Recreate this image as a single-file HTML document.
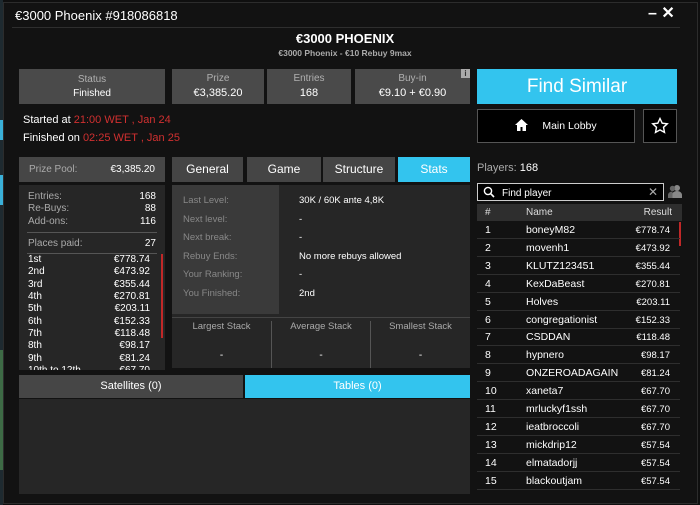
<!DOCTYPE html>
<html><head><meta charset="utf-8"><style>
*{box-sizing:border-box;margin:0;padding:0}
body{width:700px;height:505px;background:#0f0f0f;font-family:"Liberation Sans",sans-serif;color:#fff;position:relative;overflow:hidden;font-size:11px}
.a{position:absolute}
.box{background:#4a4a4a;color:#fff;text-align:center}
.lbl{color:#b0b0b0;font-size:10px}
.tab{position:absolute;top:157px;height:25px;background:#454545;text-align:center;line-height:25px;font-size:12px}
.row{position:absolute;left:477px;width:152px;height:18px;border-bottom:1px solid #2e2e2e;font-size:10px;line-height:17px}
</style></head><body>
<div class="a" style="left:0;top:0;width:3px;height:505px;background:#1e2a30"></div>
<div class="a" style="left:0;top:120px;width:3px;height:20px;background:#3ab0d8"></div>
<div class="a" style="left:0;top:175px;width:3px;height:30px;background:#3ab0d8"></div>
<div class="a" style="left:0;top:350px;width:3px;height:120px;background:#3d6a45"></div>
<div class="a" style="left:3px;top:2px;width:695px;height:502px;background:#121212;border:1px solid #2c2c2c"></div>
<div class="a" style="left:15px;top:8px;font-size:13px">€3000 Phoenix #918086818</div>
<div class="a" style="left:648px;top:3px;font-size:16px;font-weight:bold">– ✕</div>
<div class="a" style="left:12px;top:27px;width:668px;height:1px;background:#2e2e2e"></div>
<div class="a" style="left:0;width:690px;top:31px;text-align:center;font-weight:bold;font-size:13px">€3000 PHOENIX</div>
<div class="a" style="left:0;width:690px;top:48px;text-align:center;font-weight:bold;font-size:8.5px;color:#aaa">€3000 Phoenix - €10 Rebuy 9max</div>

<div class="a box" style="left:19px;top:69px;width:146px;height:35px"><div class="lbl" style="margin-top:5px">Status</div><div style="font-size:10px;margin-top:3px">Finished</div></div>
<div class="a box" style="left:172px;top:69px;width:92px;height:35px"><div class="lbl" style="margin-top:4px">Prize</div><div style="font-size:11px;margin-top:3px">€3,385.20</div></div>
<div class="a box" style="left:267px;top:69px;width:84px;height:35px"><div class="lbl" style="margin-top:4px">Entries</div><div style="font-size:11px;margin-top:3px">168</div></div>
<div class="a box" style="left:355px;top:69px;width:115px;height:35px"><div class="lbl" style="margin-top:4px">Buy-in</div><div style="font-size:11px;margin-top:3px">€9.10 + €0.90</div></div>
<div class="a" style="left:461px;top:69px;width:9px;height:9px;background:#aaa;color:#333;font-size:8px;text-align:center;line-height:9px;font-weight:bold">i</div>

<div class="a" style="left:477px;top:69px;width:200px;height:35px;background:#33c4ee;text-align:center;line-height:35px;font-size:19px">Find Similar</div>
<div class="a" style="left:477px;top:109px;width:158px;height:34px;background:#000;border:1px solid #555;font-size:10.5px;line-height:32px;text-align:center">
<svg width="13" height="12" viewBox="0 0 13 12" style="vertical-align:-2px;margin-right:14px"><path d="M6.5 0L0 6h2v6h3.5V8h2v4H11V6h2z" fill="#fff"/></svg>Main Lobby</div>
<div class="a" style="left:643px;top:109px;width:34px;height:34px;background:#000;border:1px solid #555">
<svg width="32" height="32" viewBox="0 0 32 32"><path d="M16 8.5l2.2 4.7 5.1.6-3.8 3.5 1 5.1-4.5-2.5-4.5 2.5 1-5.1-3.8-3.5 5.1-.6z" fill="none" stroke="#fff" stroke-width="1.4"/></svg></div>

<div class="a" style="left:23px;top:114px;font-size:11px">Started at <span style="color:#d03030">21:00 WET , Jan 24</span></div>
<div class="a" style="left:23px;top:132px;font-size:11px">Finished on <span style="color:#d03030">02:25 WET , Jan 25</span></div>

<div class="a" style="left:19px;top:157px;width:146px;height:25px;background:#464646;font-size:10px;line-height:25px;padding:0 10px"><span style="color:#aaa">Prize Pool:</span><span style="float:right">€3,385.20</span></div>
<div class="a" style="left:19px;top:185px;width:146px;height:185px;background:#262626;font-size:10px;line-height:12.3px;padding:6px 9px 0 9px;overflow:hidden">
<div><span style="color:#aaa">Entries:</span><span style="float:right">168</span></div>
<div><span style="color:#aaa">Re-Buys:</span><span style="float:right">88</span></div>
<div><span style="color:#aaa">Add-ons:</span><span style="float:right">116</span></div>
<div style="border-top:1px solid #555;margin:4px -1px 0;padding:5px 1px 3px;border-bottom:1px solid #555"><span style="color:#aaa">Places paid:</span><span style="float:right">27</span></div>
<div style="padding-right:6px">
<div>1st<span style="float:right">€778.74</span></div><div>2nd<span style="float:right">€473.92</span></div><div>3rd<span style="float:right">€355.44</span></div><div>4th<span style="float:right">€270.81</span></div><div>5th<span style="float:right">€203.11</span></div><div>6th<span style="float:right">€152.33</span></div><div>7th<span style="float:right">€118.48</span></div><div>8th<span style="float:right">€98.17</span></div><div>9th<span style="float:right">€81.24</span></div><div>10th to 12th<span style="float:right">€67.70</span></div></div></div>
<div class="a" style="left:161px;top:254px;width:2px;height:84px;background:#c02828"></div>

<div class="tab" style="left:172px;width:71px">General</div>
<div class="tab" style="left:247px;width:74px">Game</div>
<div class="tab" style="left:323px;width:72px">Structure</div>
<div class="tab" style="left:398px;width:72px;background:#33c4ee">Stats</div>

<div class="a" style="left:172px;top:185px;width:298px;height:183px;background:#262626"></div>
<div class="a" style="left:172px;top:185px;width:107px;height:129px;background:#3a3a3a;color:#888;font-size:9.5px;line-height:18.5px;padding:7px 11px">Last Level:<br>Next level:<br>Next break:<br>Rebuy Ends:<br>Your Ranking:<br>You Finished:</div>
<div class="a" style="left:299px;top:192px;font-size:9.5px;line-height:18.5px">30K / 60K ante 4,8K<br>-<br>-<br>No more rebuys allowed<br>-<br>2nd</div>
<div class="a" style="left:172px;top:317px;width:298px;height:1px;background:#444"></div>
<div class="a" style="left:271px;top:321px;width:1px;height:47px;background:#555"></div>
<div class="a" style="left:370px;top:321px;width:1px;height:47px;background:#555"></div>
<div class="a" style="left:172px;top:321px;width:99px;text-align:center;color:#aaa;font-size:9.5px">Largest Stack</div>
<div class="a" style="left:272px;top:321px;width:98px;text-align:center;color:#aaa;font-size:9.5px">Average Stack</div>
<div class="a" style="left:371px;top:321px;width:99px;text-align:center;color:#aaa;font-size:9.5px">Smallest Stack</div>
<div class="a" style="left:172px;top:350px;width:99px;text-align:center;font-size:10px">-</div>
<div class="a" style="left:272px;top:350px;width:98px;text-align:center;font-size:10px">-</div>
<div class="a" style="left:371px;top:350px;width:99px;text-align:center;font-size:10px">-</div>

<div class="a" style="left:19px;top:375px;width:224px;height:23px;background:#464646;text-align:center;line-height:23px;font-size:11px">Satellites (0)</div>
<div class="a" style="left:245px;top:375px;width:225px;height:23px;background:#33c4ee;text-align:center;line-height:23px;font-size:11px">Tables (0)</div>
<div class="a" style="left:19px;top:399px;width:451px;height:95px;background:#262626"></div>

<div class="a" style="left:477px;top:162px;font-size:11px"><span style="color:#aaa">Players:</span> 168</div>
<div class="a" style="left:477px;top:183px;width:187px;height:18px;background:#000;border:1px solid #ccc;font-size:10px;line-height:17px;padding-left:24px;padding-top:1px">Find player
<svg class="a" style="left:5px;top:2px" width="12" height="12" viewBox="0 0 12 12"><circle cx="5" cy="5" r="3.6" fill="none" stroke="#fff" stroke-width="1.4"/><path d="M7.6 7.6L11 11" stroke="#fff" stroke-width="1.6"/></svg>
<span class="a" style="right:5px;top:0;color:#aaa;font-size:12px">✕</span></div>
<svg class="a" style="left:667px;top:184px" width="16" height="14" viewBox="0 0 16 14"><circle cx="10" cy="4" r="3" fill="#888"/><path d="M5 14v-3c0-2 2-4 5-4s5 2 5 4v3z" fill="#888"/><circle cx="5.5" cy="4.5" r="2.7" fill="#666"/><path d="M1 14v-3c0-2 2-3.5 4.5-3.5V14z" fill="#666"/></svg>
<div class="a" style="left:477px;top:204px;width:205px;height:17px;background:#2e2e2e;font-size:10px;line-height:17px;color:#ddd"><span class="a" style="left:8px">#</span><span class="a" style="left:49px">Name</span><span class="a" style="right:10px">Result</span></div>
<div class="a" style="left:679px;top:222px;width:2px;height:24px;background:#c02828"></div>
<div id="rows"></div>
<script>
var d=[["boneyM82","€778.74"],["movenh1","€473.92"],["KLUTZ123451","€355.44"],["KexDaBeast","€270.81"],["Holves","€203.11"],["congregationist","€152.33"],["CSDDAN","€118.48"],["hypnero","€98.17"],["ONZEROADAGAIN","€81.24"],["xaneta7","€67.70"],["mrluckyf1ssh","€67.70"],["ieatbroccoli","€67.70"],["mickdrip12","€57.54"],["elmatadorjj","€57.54"],["blackoutjam","€57.54"]];
var h="";d.forEach(function(r,i){h+='<div class="row" style="top:'+(221+i*17.9)+'px;width:203px;line-height:19px"><span class="a" style="left:8px;font-size:10.5px">'+(i+1)+'</span><span class="a" style="left:49px;font-size:10.5px">'+r[0]+'</span><span class="a" style="right:10px;font-size:9.5px">'+r[1]+'</span></div>'});
document.getElementById("rows").innerHTML=h;
</script>
</body></html>
